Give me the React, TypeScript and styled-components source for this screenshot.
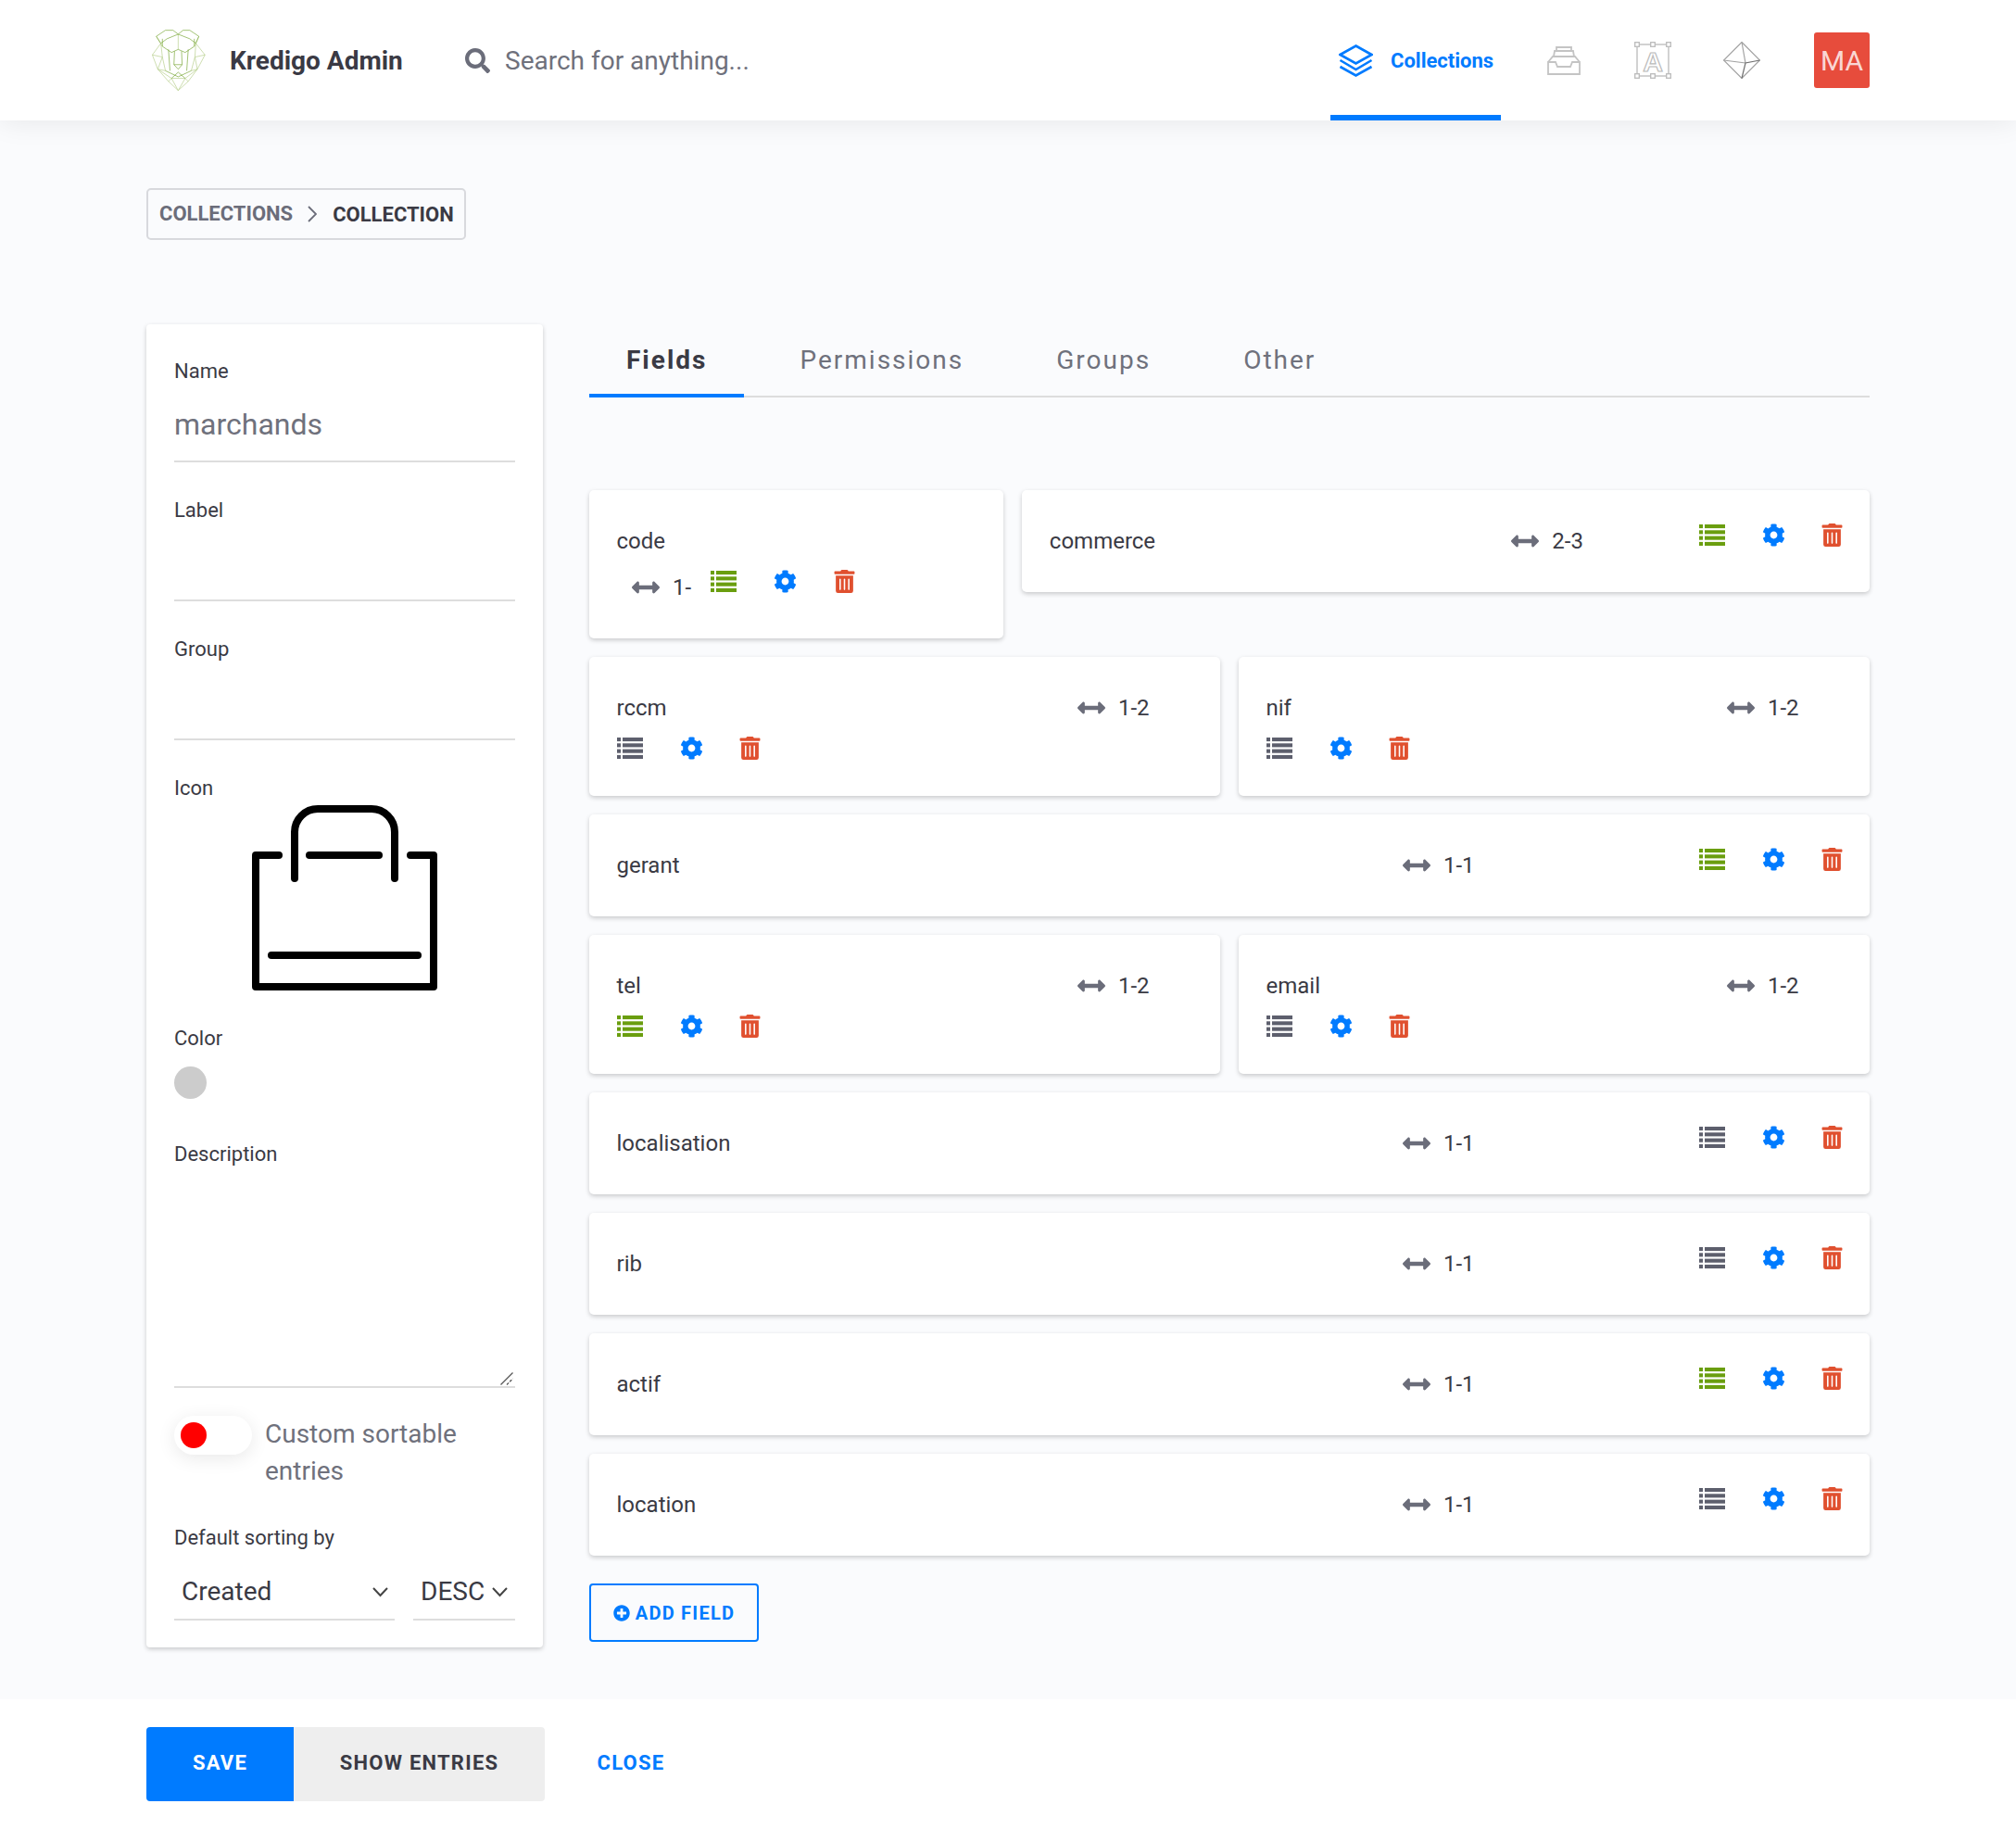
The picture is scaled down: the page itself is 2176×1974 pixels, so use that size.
import React from "react";
import styled, { createGlobalStyle } from "styled-components";
import { FaArrowsAltH, FaCog, FaPlusCircle, FaSearch, FaTrashAlt } from "react-icons/fa";

const GlobalStyle = createGlobalStyle`
  html, body { margin: 0; padding: 0; background: #fafbfd; }
  body { font-family: Roboto, "Liberation Sans", sans-serif; color: #3a3a44; }
  * { box-sizing: border-box; }
`;

const Page = styled.div`
  width: 2176px;
  height: 1974px;
  display: flex;
  flex-direction: column;
  overflow: hidden;
`;

const Header = styled.header`
  height: 130px;
  flex: none;
  padding: 0 158px 0 164px;
  display: flex;
  align-items: center;
  background: #fff;
  box-shadow: 0 0 30px rgba(0, 0, 0, 0.09);
  position: relative;
`;

const Brand = styled.div`
  display: flex;
  align-items: center;
  gap: 26px;
  font-size: 28px;
  font-weight: 700;
  width: 338px;
`;

const Search = styled.div`
  display: flex;
  align-items: center;
  gap: 16px;
  font-size: 28px;
  color: #6f717c;
  flex: 1;
  svg { font-size: 27px; color: #6b6d7a; }
`;

const NavActive = styled.div`
  width: 184px;
  height: 130px;
  border-bottom: 6px solid #007bff;
  padding: 6px 0 0 9px;
  display: flex;
  align-items: center;
  gap: 19px;
  color: #007bff;
  font-size: 22px;
  font-weight: 700;
`;

const NavIcons = styled.div`
  display: flex;
  align-items: center;
  margin-left: 50px;
`;

const NavIcon = styled.div<{ $gap: number }>`
  display: flex;
  margin-right: ${(p) => p.$gap}px;
`;

const Avatar = styled.div`
  width: 60px;
  height: 60px;
  border-radius: 3px;
  background: #e74c3c;
  color: rgba(255, 255, 255, 0.8);
  font-size: 30px;
  display: flex;
  align-items: center;
  justify-content: center;
`;

const Crumbs = styled.div`
  align-self: flex-start;
  margin: 73px 0 91px 158px;
  width: 345px;
  height: 56px;
  padding: 0 0 1px 12px;
  border: 2px solid #d8d9dd;
  border-radius: 5px;
  display: flex;
  align-items: center;
  font-size: 22px;
  font-weight: 700;
  color: #6b6d7a;
`;

const CrumbCurrent = styled.span`
  color: #3a3a44;
  margin-top: 2px;
`;

const CrumbArrow = styled.svg`
  margin: 0 17px 0 16px;
`;

const Main = styled.main`
  flex: 1;
  display: flex;
  gap: 50px;
  padding: 0 158px;
`;

const Panel = styled.aside`
  width: 428px;
  height: 1428px;
  flex: none;
  padding: 35px 30px 0;
  background: #fff;
  border-radius: 4px;
  box-shadow: 0 2px 5px rgba(0, 0, 0, 0.2);
`;

const Label = styled.div<{ $top?: number }>`
  font-size: 22px;
  height: 30px;
  line-height: 32px;
  margin-top: ${(p) => p.$top ?? 0}px;
`;

const TextField = styled.div`
  height: 84px;
  padding-top: 22px;
  font-size: 32px;
  line-height: 42px;
  color: #6f717c;
  border-bottom: 2px solid #ddd;
`;

const BagWrap = styled.div`
  display: flex;
  justify-content: center;
  margin-top: 4px;
`;

const Swatch = styled.div`
  width: 35px;
  height: 35px;
  border-radius: 50%;
  background: #ccc;
  margin-top: 16px;
`;

const DescriptionBox = styled.div`
  position: relative;
`;

const Description = styled.textarea`
  display: block;
  width: 100%;
  height: 238px;
  padding: 0;
  border: 0;
  border-bottom: 2px solid #ddd;
  background: transparent;
  outline: none;
  resize: none;
`;

const ResizeGrip = styled.svg`
  position: absolute;
  right: 2px;
  bottom: 3px;
`;

const ToggleRow = styled.div`
  display: flex;
  gap: 14px;
  margin-top: 29px;
  font-size: 28px;
  line-height: 40px;
  color: #6f717c;
`;

const ToggleText = styled.div`
  padding-top: 1px;
`;

const Toggle = styled.div`
  width: 84px;
  height: 42px;
  flex: none;
  padding: 7px;
  margin-top: 1px;
  border-radius: 21px;
  background: #fff;
  box-shadow: 0 4px 20px rgba(0, 0, 0, 0.09);
`;

const ToggleKnob = styled.div`
  width: 28px;
  height: 28px;
  border-radius: 50%;
  background: #f00;
`;

const Selects = styled.div`
  display: flex;
  gap: 20px;
`;

const Select = styled.div<{ $width: number; $pad: number; $arrowGap: number }>`
  width: ${(p) => p.$width}px;
  height: 75px;
  padding: 24px 0 0 ${(p) => p.$pad}px;
  border-bottom: 2px solid #ddd;
  font-size: 28px;
  line-height: 40px;
  display: flex;
  align-items: flex-start;
  svg { margin: 15px 0 0 ${(p) => p.$arrowGap}px; }
`;

const Content = styled.section`
  flex: 1;
`;

const Tabs = styled.nav`
  height: 79px;
  display: flex;
  gap: 20px;
  border-bottom: 2px solid #ddd;
`;

const Tab = styled.div<{ $active?: boolean }>`
  height: 79px;
  padding: 0 40px;
  line-height: 78px;
  font-size: 28px;
  letter-spacing: 2px;
  font-weight: ${(p) => (p.$active ? 700 : 400)};
  color: ${(p) => (p.$active ? "#3a3a44" : "#6f717c")};
  border-bottom: ${(p) => (p.$active ? "4px solid #007bff" : "none")};
`;

const FieldGrid = styled.div`
  margin-top: 100px;
  display: grid;
  grid-template-columns: repeat(6, 1fr);
  gap: 20px;
  align-items: start;
`;

const Card = styled.div<{ $span: number }>`
  grid-column: span ${(p) => p.$span};
  padding: 30px 28px 30px 29.5px;
  display: flex;
  flex-wrap: wrap;
  align-items: center;
  background: #fff;
  border-radius: 5px;
  box-shadow: 0 2px 5px rgba(0, 0, 0, 0.2);
`;

const FieldName = styled.div<{ $width?: number }>`
  flex: 0 0 ${(p) => (p.$width ? `${p.$width}px` : "100%")};
  font-size: 24px;
  line-height: 50px;
`;

const Range = styled.div<{ $indent?: boolean }>`
  display: flex;
  align-items: center;
  height: 50px;
  gap: 14.5px;
  font-size: 24px;
  margin-left: ${(p) => (p.$indent ? 16 : 0)}px;
  svg { font-size: 30px; color: #6b6d7a; }
`;

const RangeValue = styled.span<{ $narrow?: boolean }>`
  width: ${(p) => (p.$narrow ? "20px" : "auto")};
`;

const Actions = styled.div<{ $mode: "right" | "below" | "inline" }>`
  display: flex;
  align-items: center;
  gap: 38.5px;
  height: 36px;
  flex-basis: ${(p) => (p.$mode === "below" ? "100%" : "auto")};
  margin-bottom: ${(p) => (p.$mode === "below" ? 4 : 14)}px;
  margin-left: ${(p) => (p.$mode === "right" ? "auto" : p.$mode === "inline" ? "21px" : "0")};
`;

const ListGlyph = styled.svg<{ $on?: boolean }>`
  fill: ${(p) => (p.$on ? "#6a9e0f" : "#5d5f6d")};
  margin-right: 1.5px;
`;

const GearIcon = styled(FaCog)`
  font-size: 25px;
  color: #007bff;
`;

const TrashIcon = styled(FaTrashAlt)`
  font-size: 25px;
  color: #e0502f;
`;

const AddField = styled.button`
  display: flex;
  align-items: center;
  justify-content: center;
  gap: 6px;
  width: 183px;
  height: 63px;
  margin-top: 30px;
  padding: 0;
  border: 2px solid #007bff;
  border-radius: 4px;
  background: transparent;
  color: #007bff;
  font: 700 20px Roboto, sans-serif;
  letter-spacing: 1.25px;
  svg { font-size: 18px; }
`;

const Footer = styled.footer`
  height: 140px;
  flex: none;
  padding: 30px 158px;
  display: flex;
  background: #fff;
`;

const FooterButton = styled.button<{ $kind: "save" | "show" | "close" }>`
  height: 80px;
  width: ${(p) => (p.$kind === "save" ? 159 : p.$kind === "show" ? 271 : 186)}px;
  padding: 0 0 4px;
  border: 0;
  font: 700 22px Roboto, sans-serif;
  letter-spacing: 1.25px;
  border-radius: ${(p) => (p.$kind === "save" ? "4px 0 0 4px" : p.$kind === "show" ? "0 4px 4px 0" : "0")};
  background: ${(p) => (p.$kind === "save" ? "#007bff" : p.$kind === "show" ? "#eee" : "transparent")};
  color: ${(p) => (p.$kind === "save" ? "#fff" : p.$kind === "show" ? "#3a3a44" : "#007bff")};
`;

const Lion = () => (
  <svg width="58" height="66" viewBox="42 35 174 201" fill="none" strokeWidth="2" strokeLinejoin="round">
    <g stroke="#b4cd88">
      <path d="M70 80L42 118L60 165L95 205L127 235L160 205L190 165L215 118L185 80" />
      <path d="M42 118L75 125L60 165L85 170L75 125L70 80M215 118L182 125L190 165L170 170L182 125L185 80" />
      <path d="M60 165L105 195L95 205M190 165L150 195L160 205M105 195L127 235L150 195M105 195H150" />
      <path d="M127 50V100M55 57L75 90M195 57L180 90" />
    </g>
    <g stroke="#74a32f">
      <path d="M85 37H110L127 50L143 37H165L195 57L185 80L165 65L127 50L90 65L70 80L55 57Z" />
      <path d="M75 65L75 90L105 110L127 100L150 110L180 90L180 65" />
      <path d="M95 100L100 170M160 100L155 170M115 106L113 150L127 165L140 150L138 106M113 150H140" />
      <path d="M85 170L127 190L170 170M105 195L127 175L150 195" />
    </g>
  </svg>
);

const LayersIcon = () => (
  <svg width="37" height="35" viewBox="0 0 37 35" fill="none" stroke="#007bff" strokeWidth="2.6">
    <path d="M18.5 1.5L35.5 11L18.5 20.5L1.5 11Z" />
    <path d="M1.5 17L18.5 27L35.5 17" />
    <path d="M1.5 24L18.5 33.5L35.5 24" />
  </svg>
);

const InboxIcon = () => (
  <svg width="36" height="31" viewBox="0 0 36 31" fill="none" stroke="#c4c4c4" strokeWidth="1.8">
    <path d="M10 5V1H26V5M7 11L8 5H28L29 11" />
    <path d="M1 17L6 11H30L35 17M1 17V30H35V17H27L25 22H11L9 17Z" />
  </svg>
);

const TypeIcon = () => (
  <svg width="40" height="40" viewBox="0 0 40 40" fill="none" stroke="#bbb" strokeWidth="1.3">
    <rect x="3" y="3" width="34" height="34" />
    {[
      [0, 0], [17, 0], [34, 0], [0, 34], [17, 34], [34, 34],
    ].map(([x, y]) => (
      <rect key={`${x}-${y}`} x={x + 0.7} y={y + 0.7} width="4.6" height="4.6" fill="#fff" />
    ))}
    <text x="20" y="32" textAnchor="middle" fontFamily="Liberation Sans, sans-serif" fontWeight="700" fontSize="30" strokeWidth="1.2">
      A
    </text>
  </svg>
);

const GemIcon = () => (
  <svg width="40" height="40" viewBox="0 0 40 40" fill="none" stroke="#a2a2a2" strokeWidth="1.2">
    <path d="M20 0.5L39.5 20L20 39.5L0.5 20Z" />
    <path d="M20 0.5L24 23M0.5 20L24 23" />
    <path d="M39.5 20L24 23L20 39.5" stroke="#707070" />
  </svg>
);

const BagIcon = () => (
  <svg width="200" height="200" viewBox="0 0 200 200" fill="none" stroke="#000" strokeWidth="8" strokeLinecap="round" strokeLinejoin="round">
    <path d="M29 54H4V196H196V54H171" />
    <path d="M62 54H137" />
    <path d="M46 79V29A25 25 0 0 1 71 4H129A25 25 0 0 1 154 29V79" />
    <path d="M21 162H179" />
  </svg>
);

const ListIcon = ({ on }: { on?: boolean }) => (
  <ListGlyph $on={on} width="28" height="23" viewBox="0 0 28 23">
    {[0, 6.3, 12.6, 18.9].map((y) => (
      <React.Fragment key={y}>
        <rect x="0" y={y} width="4" height="4.1" />
        <rect x="6" y={y} width="22" height="4.1" />
      </React.Fragment>
    ))}
  </ListGlyph>
);

const Chevron = () => (
  <svg width="17" height="11" viewBox="0 0 17 11" fill="none" stroke="#444" strokeWidth="2">
    <path d="M1 1L8.5 9L16 1" />
  </svg>
);

type Field = {
  name: string;
  range: string;
  span: number;
  on?: boolean;
  nameWidth?: number;
  layout: "wide" | "stacked" | "narrow";
};

const fields: Field[] = [
  { name: "code", range: "1-", span: 2, on: true, layout: "narrow" },
  { name: "commerce", range: "2-3", span: 4, on: true, nameWidth: 498, layout: "wide" },
  { name: "rccm", range: "1-2", span: 3, nameWidth: 497, layout: "stacked" },
  { name: "nif", range: "1-2", span: 3, nameWidth: 497, layout: "stacked" },
  { name: "gerant", range: "1-1", span: 6, on: true, nameWidth: 848, layout: "wide" },
  { name: "tel", range: "1-2", span: 3, on: true, nameWidth: 497, layout: "stacked" },
  { name: "email", range: "1-2", span: 3, nameWidth: 497, layout: "stacked" },
  { name: "localisation", range: "1-1", span: 6, nameWidth: 848, layout: "wide" },
  { name: "rib", range: "1-1", span: 6, nameWidth: 848, layout: "wide" },
  { name: "actif", range: "1-1", span: 6, on: true, nameWidth: 848, layout: "wide" },
  { name: "location", range: "1-1", span: 6, nameWidth: 848, layout: "wide" },
];

const FieldCard = ({ field }: { field: Field }) => {
  const narrow = field.layout === "narrow";
  const mode = narrow ? "inline" : field.layout === "stacked" ? "below" : "right";
  return (
    <Card $span={field.span}>
      <FieldName $width={field.nameWidth}>{field.name}</FieldName>
      <Range $indent={narrow}>
        <FaArrowsAltH />
        <RangeValue $narrow={narrow}>{field.range}</RangeValue>
      </Range>
      <Actions $mode={mode}>
        <ListIcon on={field.on} />
        <GearIcon />
        <TrashIcon />
      </Actions>
    </Card>
  );
};

export default function App() {
  return (
    <Page>
      <GlobalStyle />
      <Header>
        <Brand>
          <Lion />
          Kredigo Admin
        </Brand>
        <Search>
          <FaSearch />
          Search for anything...
        </Search>
        <NavActive>
          <LayersIcon />
          Collections
        </NavActive>
        <NavIcons>
          <NavIcon $gap={58}>
            <InboxIcon />
          </NavIcon>
          <NavIcon $gap={56}>
            <TypeIcon />
          </NavIcon>
          <NavIcon $gap={58}>
            <GemIcon />
          </NavIcon>
          <Avatar>MA</Avatar>
        </NavIcons>
      </Header>
      <Crumbs>
        COLLECTIONS
        <CrumbArrow width="10" height="18" viewBox="0 0 10 18" fill="none" stroke="#6b6d7a" strokeWidth="1.8">
          <path d="M1 1L9 9L1 17" />
        </CrumbArrow>
        <CrumbCurrent>COLLECTION</CrumbCurrent>
      </Crumbs>
      <Main>
        <Panel>
          <Label>Name</Label>
          <TextField>marchands</TextField>
          <Label $top={36}>Label</Label>
          <TextField />
          <Label $top={36}>Group</Label>
          <TextField />
          <Label $top={36}>Icon</Label>
          <BagWrap>
            <BagIcon />
          </BagWrap>
          <Label $top={36}>Color</Label>
          <Swatch />
          <Label $top={44}>Description</Label>
          <DescriptionBox>
            <Description />
            <ResizeGrip width="14" height="14" viewBox="0 0 14 14" fill="none" stroke="#555" strokeWidth="1.3">
              <path d="M0.5 13.5L13.5 0.5" />
              <path d="M7 13.5L13.5 7" strokeDasharray="3 1.5" />
            </ResizeGrip>
          </DescriptionBox>
          <ToggleRow>
            <Toggle>
              <ToggleKnob />
            </Toggle>
            <ToggleText>Custom sortable entries</ToggleText>
          </ToggleRow>
          <Label $top={36}>Default sorting by</Label>
          <Selects>
            <Select $width={238} $pad={8} $arrowGap={109}>
              Created
              <Chevron />
            </Select>
            <Select $width={110} $pad={8} $arrowGap={8}>
              DESC
              <Chevron />
            </Select>
          </Selects>
        </Panel>
        <Content>
          <Tabs>
            <Tab $active>Fields</Tab>
            <Tab>Permissions</Tab>
            <Tab>Groups</Tab>
            <Tab>Other</Tab>
          </Tabs>
          <FieldGrid>
            {fields.map((field) => (
              <FieldCard key={field.name} field={field} />
            ))}
          </FieldGrid>
          <AddField>
            <FaPlusCircle />
            ADD FIELD
          </AddField>
        </Content>
      </Main>
      <Footer>
        <FooterButton $kind="save">SAVE</FooterButton>
        <FooterButton $kind="show">SHOW ENTRIES</FooterButton>
        <FooterButton $kind="close">CLOSE</FooterButton>
      </Footer>
    </Page>
  );
}
